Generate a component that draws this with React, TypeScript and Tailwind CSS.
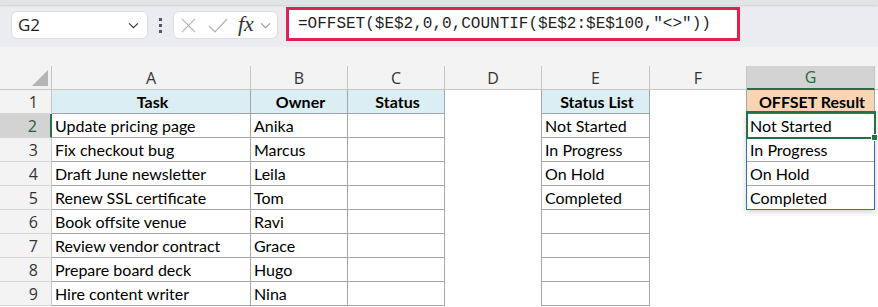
import { FC, ReactNode } from 'react';

const COLS = [
  { key: 'A', w: 'w-[199px]' },
  { key: 'B', w: 'w-[97px]' },
  { key: 'C', w: 'w-[97px]' },
  { key: 'D', w: 'w-[97px]' },
  { key: 'E', w: 'w-[108px]' },
  { key: 'F', w: 'w-[97px]' },
  { key: 'G', w: 'w-[128px]' },
];

const tasks = [
  ['Task', 'Owner'],
  ['Update pricing page', 'Anika'],
  ['Fix checkout bug', 'Marcus'],
  ['Draft June newsletter', 'Leila'],
  ['Renew SSL certificate', 'Tom'],
  ['Book offsite venue', 'Ravi'],
  ['Review vendor contract', 'Grace'],
  ['Prepare board deck', 'Hugo'],
  ['Hire content writer', 'Nina'],
];

const statusList = ['Status List', 'Not Started', 'In Progress', 'On Hold', 'Completed'];

const Chevron: FC<{ className?: string }> = ({ className }) => (
  <svg viewBox="0 0 12 8" className={className} fill="none">
    <path d="M1 1.5 L6 6.5 L11 1.5" stroke="currentColor" strokeWidth="1.3" />
  </svg>
);

const Toolbar: FC = () => (
  <div className="h-[47px] bg-[#eaecef] flex flex-col">
    <div className="h-[5px] bg-[#e2e3e5] shadow-[0_1px_2px_rgba(0,0,0,0.12)]" />
    <div className="flex items-start pt-[2px]">
      {/* name box */}
      <div className="mt-[4px] ml-[11px] w-[137px] h-[28px] rounded-md bg-white border border-[#dcdee1] flex items-center pl-[6px] pr-[8px] justify-between">
        <span className="font-['Open_Sans'] text-[17px] text-[#1f1f1f]">G2</span>
        <Chevron className="w-[11px] h-[7px] text-[#333]" />
      </div>
      {/* grip dots */}
      <div className="mt-[11px] ml-[11px] flex flex-col gap-[3px]">
        <span className="w-[3px] h-[3px] bg-[#555]" />
        <span className="w-[3px] h-[3px] bg-[#555]" />
        <span className="w-[3px] h-[3px] bg-[#555]" />
      </div>
      {/* cancel / enter / fx */}
      <div className="mt-[4px] ml-[11px] w-[105px] h-[28px] rounded-md bg-white border border-[#dcdee1] flex items-center">
        <svg viewBox="0 0 16 16" className="ml-[7px] w-[15px] h-[15px]" fill="none">
          <path d="M1 1 L15 15 M15 1 L1 15" stroke="#b3b3b3" strokeWidth="1.2" />
        </svg>
        <svg viewBox="0 0 20 15" className="ml-[12px] w-[20px] h-[15px]" fill="none">
          <path d="M1 8 L7 14 L19 1" stroke="#b3b3b3" strokeWidth="1.2" />
        </svg>
        <span className="ml-[10px] font-['Liberation_Serif'] italic text-[22px] leading-none text-[#333] -mt-[2px]">fx</span>
        <Chevron className="ml-[6px] w-[11px] h-[7px] text-[#9a9a9a]" />
      </div>
      {/* formula box */}
      <div className="ml-[8px] w-[454px] h-[34px] bg-white border-[3px] border-[#e0214f] flex items-center pl-[9px]">
        <span className="font-['Liberation_Mono'] text-[16px] text-[#1f1f1f] whitespace-pre">
          =OFFSET($E$2,0,0,COUNTIF($E$2:$E$100,"&lt;&gt;"))
        </span>
      </div>
    </div>
  </div>
);

const Cell: FC<{ w: string; cls?: string; children?: ReactNode }> = ({ w, cls = '', children }) => (
  <div className={`${w} h-full shrink-0 flex items-center pl-[3px] pt-[1px] overflow-hidden whitespace-nowrap ${cls}`}>
    {children}
  </div>
);

const App: FC = () => {
  const rows = Array.from({ length: 9 }, (_, i) => i + 1);
  return (
    <div className="w-[878px] h-[307px] overflow-hidden bg-white">
      <Toolbar />
      <div className="h-[19px] bg-[#f3f3f3]" />
      <div className="relative">
        {/* column headers */}
        <div className="flex h-[24px] bg-[#f3f3f3] font-['Open_Sans'] text-[16px] text-[#333]">
          <div className="w-[52px] shrink-0 h-full border-r border-b border-[#c6c6c6] relative">
            <svg viewBox="0 0 16 16" className="absolute left-[32px] top-[4px] w-[16px] h-[16px]">
              <path d="M16 0 L16 16 L0 16 Z" fill="#b5b5b5" />
            </svg>
          </div>
          {COLS.map((c) =>
            c.key === 'G' ? (
              <div key={c.key} className={`${c.w} shrink-0 h-full flex items-center justify-center bg-[#d3d3d3] text-[#1d6b3e] border-r border-[#c6c6c6] border-b-2 border-b-[#217346]`}>
                {c.key}
              </div>
            ) : (
              <div key={c.key} className={`${c.w} shrink-0 h-full flex items-center justify-center border-r border-b border-[#c6c6c6]`}>
                {c.key}
              </div>
            )
          )}
          <div className="flex-1 h-full border-b border-[#c6c6c6]" />
        </div>

        {/* data rows */}
        {rows.map((r) => {
          const head = r === 1;
          const t = tasks[r - 1];
          const s = statusList[r - 1];
          const txt = head ? 'font-bold justify-center pl-0' : '';
          const box = 'border-r border-b border-[#a6a6a6]';
          return (
            <div key={r} className="flex h-[24px] font-['Lato'] text-[16px] text-black">
              <div
                className={`w-[52px] shrink-0 h-full flex items-center justify-end pr-[13px] font-['Open_Sans'] text-[16px] border-b border-[#d6d6d6] ${
                  r === 2 ? 'bg-[#d3d3d3] text-[#1d5e38] border-r-2 border-r-[#217346]' : 'bg-[#f3f3f3] text-[#333] border-r border-r-[#c6c6c6]'
                }`}
              >
                {r}
              </div>
              <Cell w="w-[199px]" cls={`${box} ${txt} ${head ? 'bg-[#daeef3]' : ''}`}>{t[0]}</Cell>
              <Cell w="w-[97px]" cls={`${box} ${txt} ${head ? 'bg-[#daeef3]' : ''}`}>{t[1]}</Cell>
              <Cell w="w-[97px]" cls={`${box} ${txt} ${head ? 'bg-[#daeef3]' : ''}`}>{head ? 'Status' : ''}</Cell>
              <Cell w="w-[97px]" cls="border-r border-[#a6a6a6]" />
              <Cell w="w-[108px]" cls={`${box} ${txt} ${head ? 'bg-[#daeef3]' : ''}`}>{s ?? ''}</Cell>
              <Cell w="w-[97px]" cls={r <= 5 ? 'border-r border-[#a6a6a6]' : ''} />
              {r === 1 ? (
                <Cell w="w-[128px]" cls={`${box} ${txt} bg-[#fbd4b4]`}>OFFSET Result</Cell>
              ) : r <= 5 ? (
                <Cell w="w-[128px]" cls={box}>{s}</Cell>
              ) : (
                <Cell w="w-[128px]" />
              )}
            </div>
          );
        })}

        {/* spill range outline */}
        <div className="absolute left-[746px] top-[47px] w-[129px] h-[97px] border border-[#2f6bd1] shadow-[0_2px_6px_rgba(0,0,0,0.18)] pointer-events-none" />
        {/* active cell */}
        <div className="absolute left-[746px] top-[45px] w-[130px] h-[28px] border-2 border-[#217346] pointer-events-none" />
        <div className="absolute left-[871px] top-[68px] w-[7px] h-[7px] bg-[#217346] border border-white pointer-events-none" />
      </div>
    </div>
  );
};

export default App;
